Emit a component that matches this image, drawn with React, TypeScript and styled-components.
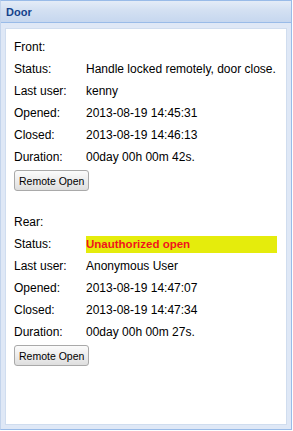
import React from "react";
import styled, { createGlobalStyle } from "styled-components";

const GlobalStyle = createGlobalStyle`
    html, body {
        margin: 0;
        padding: 0;
        background: #ffffff;
    }
`;

const Panel = styled.div`
    width: 292px;
    height: 430px;
    box-sizing: border-box;
    border: 1px solid #99bbe8;
    border-left-color: #c3d4ec;
    background: #dfe8f6;
    display: flex;
    flex-direction: column;
    font-family: "Liberation Sans", Arial, sans-serif;
    font-size: 12px;
    color: #000;
`;

const Header = styled.div`
    height: 21px;
    flex: none;
    border-bottom: 1px solid #99bbe8;
    background: linear-gradient(to bottom, #e4ecf7 0%, #d3e0f2 45%, #c6d7ef 100%);
    display: flex;
    align-items: center;
    padding-left: 5px;
    font-weight: bold;
    font-size: 11px;
    color: #15428b;
`;

const Frame = styled.div`
    flex: 1;
    padding: 5px 4px 4px 4px;
    display: flex;
`;

const Body = styled.div`
    flex: 1;
    background: #ffffff;
    border: 1px solid #d0ddef;
    padding: 7px 8px 0 8px;
`;

const Section = styled.div`
    margin-bottom: 20px;
`;

const Title = styled.div`
    height: 22px;
    line-height: 22px;
`;

const Row = styled.div`
    display: flex;
    height: 22px;
    align-items: center;
`;

const Label = styled.div`
    width: 72px;
    flex: none;
`;

const Value = styled.div<{ $alert?: boolean }>`
    flex: 1;
    margin-right: 1px;
    height: 17px;
    line-height: 17px;
    white-space: nowrap;
    background: ${props => (props.$alert ? "#e5ec0c" : "transparent")};
    color: ${props => (props.$alert ? "#f0141e" : "#000")};
    font-weight: ${props => (props.$alert ? "bold" : "normal")};
    font-size: ${props => (props.$alert ? "11.5px" : "12px")};
`;

const Button = styled.button`
    margin-top: 2px;
    height: 21px;
    padding: 0 4px;
    border: 1px solid #a9a9a9;
    border-radius: 3px;
    background: linear-gradient(to bottom, #fbfbfb 0%, #ececec 55%, #dedede 100%);
    font-family: "Liberation Sans", Arial, sans-serif;
    font-size: 10.5px;
    color: #000;
`;

interface DoorInfo {
    title: string;
    status: string;
    alert?: boolean;
    user: string;
    opened: string;
    closed: string;
    duration: string;
}

const doors: DoorInfo[] = [
    {
        title: "Front:",
        status: "Handle locked remotely, door close.",
        user: "kenny",
        opened: "2013-08-19 14:45:31",
        closed: "2013-08-19 14:46:13",
        duration: "00day 00h 00m 42s.",
    },
    {
        title: "Rear:",
        status: "Unauthorized open",
        alert: true,
        user: "Anonymous User",
        opened: "2013-08-19 14:47:07",
        closed: "2013-08-19 14:47:34",
        duration: "00day 00h 00m 27s.",
    },
];

const DoorSection = ({ door }: { door: DoorInfo }) => (
    <Section>
        <Title>{door.title}</Title>
        <Row>
            <Label>Status:</Label>
            <Value $alert={door.alert}>{door.status}</Value>
        </Row>
        <Row>
            <Label>Last user:</Label>
            <Value>{door.user}</Value>
        </Row>
        <Row>
            <Label>Opened:</Label>
            <Value>{door.opened}</Value>
        </Row>
        <Row>
            <Label>Closed:</Label>
            <Value>{door.closed}</Value>
        </Row>
        <Row>
            <Label>Duration:</Label>
            <Value>{door.duration}</Value>
        </Row>
        <Button>Remote Open</Button>
    </Section>
);

export default function App() {
    return (
        <>
            <GlobalStyle />
            <Panel>
                <Header>Door</Header>
                <Frame>
                    <Body>
                        {doors.map(d => <DoorSection key={d.title} door={d} />)}
                    </Body>
                </Frame>
            </Panel>
        </>
    );
}
